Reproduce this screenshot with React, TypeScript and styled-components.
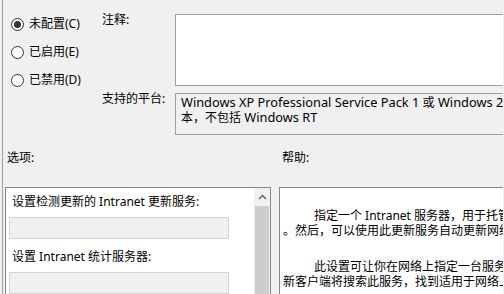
import React from "react";
import styled, { createGlobalStyle } from "styled-components";

const GlobalStyle = createGlobalStyle`
  html, body {
    margin: 0;
    padding: 0;
    background: #f0f0f0;
    overflow: hidden;
  }
  body {
    font-family: "Noto Sans", "Noto Sans CJK SC", sans-serif;
    font-size: 12px;
    color: #000;
  }
`;

const Frame = styled.div`
  width: 501px;
  height: 294px;
  margin-left: 2px;
  border-left: 1px solid #a0a0a0;
  overflow: hidden;
  box-sizing: border-box;
`;

const TopSection = styled.div`
  display: flex;
  height: 135px;
`;

const RadioGroup = styled.div`
  width: 99px;
  flex: none;
  display: flex;
  flex-direction: column;
  padding: 10px 0 0 8px;
  box-sizing: border-box;
`;

const RadioRow = styled.label`
  display: flex;
  align-items: center;
  height: 28px;
  gap: 5px;
  line-height: 12px;
  white-space: nowrap;
`;

const RadioCircle = styled.span<{ $checked?: boolean }>`
  width: 13px;
  height: 13px;
  box-sizing: border-box;
  border: 1px solid #333;
  border-radius: 50%;
  background: #fff;
  display: flex;
  align-items: center;
  justify-content: center;
  &::after {
    content: "";
    width: 7px;
    height: 7px;
    border-radius: 50%;
    background: ${(p) => (p.$checked ? "#333" : "transparent")};
  }
`;

const FieldGrid = styled.div`
  display: grid;
  grid-template-columns: 73px 380px;
  grid-template-rows: 72px 42px;
  row-gap: 7px;
  padding-top: 14px;
`;

const FieldLabel = styled.div`
  line-height: 12px;
  white-space: nowrap;
`;

const CommentBox = styled.div`
  border: 1px solid #a0a0a0;
  background: #fff;
  box-sizing: border-box;
`;

const PlatformBox = styled.div`
  border: 1px solid #a0a0a0;
  background: #f0f0f0;
  box-sizing: border-box;
  padding: 1px 0 0 5px;
  font-size: 12.8px;
  line-height: 15px;
  white-space: nowrap;
  overflow: hidden;
`;

const Cjk = styled.span`
  font-size: 12px;
  line-height: 15px;
`;

const LowerSection = styled.div`
  display: grid;
  grid-template-columns: 266px 1fr;
  grid-template-rows: 12px 1fr;
  column-gap: 8px;
  row-gap: 23px;
  padding: 17px 0 0 2px;
`;

const SectionLabel = styled.div<{ $indent: number }>`
  line-height: 12px;
  padding-left: ${(p) => p.$indent}px;
`;

const Panel = styled.div`
  border: 1px solid #828790;
  background: #fff;
  height: 140px;
  box-sizing: border-box;
  overflow: hidden;
`;

const OptionsPanel = styled(Panel)`
  display: flex;
`;

const OptionsContent = styled.div`
  flex: 1;
  padding: 8px 0 0 3px;
`;

const OptionLabel = styled.div`
  line-height: 12px;
  padding-left: 3px;
  margin-bottom: 9px;
  white-space: nowrap;
`;

const OptionInput = styled.div`
  width: 220px;
  height: 22px;
  box-sizing: border-box;
  border: 1px solid #d4d4d4;
  background: #f0f0f0;
  margin-bottom: 12px;
`;

const ScrollBar = styled.div`
  width: 16px;
  flex: none;
  background: #f0f0f0;
  display: flex;
  flex-direction: column;
  align-items: center;
`;

const ScrollArrow = styled.div`
  height: 18px;
  width: 100%;
  display: flex;
  align-items: center;
  justify-content: center;
`;

const ScrollThumb = styled.div`
  width: 14px;
  flex: 1;
  background: #cdcdcd;
`;

const HelpPanel = styled(Panel)`
  width: 300px;
  padding: 20px 0 0 3px;
`;

const HelpPara = styled.p`
  margin: 0 0 21px;
  line-height: 15px;
  text-indent: 31px;
  white-space: nowrap;
`;

export default function App() {
  return (
    <>
      <GlobalStyle />
      <Frame>
        <TopSection>
          <RadioGroup>
            <RadioRow>
              <RadioCircle $checked />
              未配置(C)
            </RadioRow>
            <RadioRow>
              <RadioCircle />
              已启用(E)
            </RadioRow>
            <RadioRow>
              <RadioCircle />
              已禁用(D)
            </RadioRow>
          </RadioGroup>
          <FieldGrid>
            <FieldLabel>注释:</FieldLabel>
            <CommentBox />
            <FieldLabel>支持的平台:</FieldLabel>
            <PlatformBox>
              Windows XP Professional Service Pack 1 <Cjk>或</Cjk> Windows 2000 Service Pack 3 <Cjk>以上版</Cjk>
              <br />
              <Cjk>本，不包括</Cjk> Windows RT
            </PlatformBox>
          </FieldGrid>
        </TopSection>
        <LowerSection>
          <SectionLabel $indent={2}>选项:</SectionLabel>
          <SectionLabel $indent={3}>帮助:</SectionLabel>
          <OptionsPanel>
            <OptionsContent>
              <OptionLabel>设置检测更新的 Intranet 更新服务:</OptionLabel>
              <OptionInput />
              <OptionLabel>设置 Intranet 统计服务器:</OptionLabel>
              <OptionInput />
            </OptionsContent>
            <ScrollBar>
              <ScrollArrow>
                <svg width="9" height="6" viewBox="0 0 9 6">
                  <path d="M1 5 L4.5 1.5 L8 5" fill="none" stroke="#606060" strokeWidth="1.3" />
                </svg>
              </ScrollArrow>
              <ScrollThumb />
            </ScrollBar>
          </OptionsPanel>
          <HelpPanel>
            <HelpPara>
              指定一个 Intranet 服务器，用于托管来自 Microsoft 更新网站的更新
              <br />
              。然后，可以使用此更新服务自动更新网络上的计算机。
            </HelpPara>
            <HelpPara>
              此设置可让你在网络上指定一台服务器作为内部更新服务。自动更
              <br />
              新客户端将搜索此服务，找到适用于网络上的计算机的更新。
            </HelpPara>
          </HelpPanel>
        </LowerSection>
      </Frame>
    </>
  );
}
